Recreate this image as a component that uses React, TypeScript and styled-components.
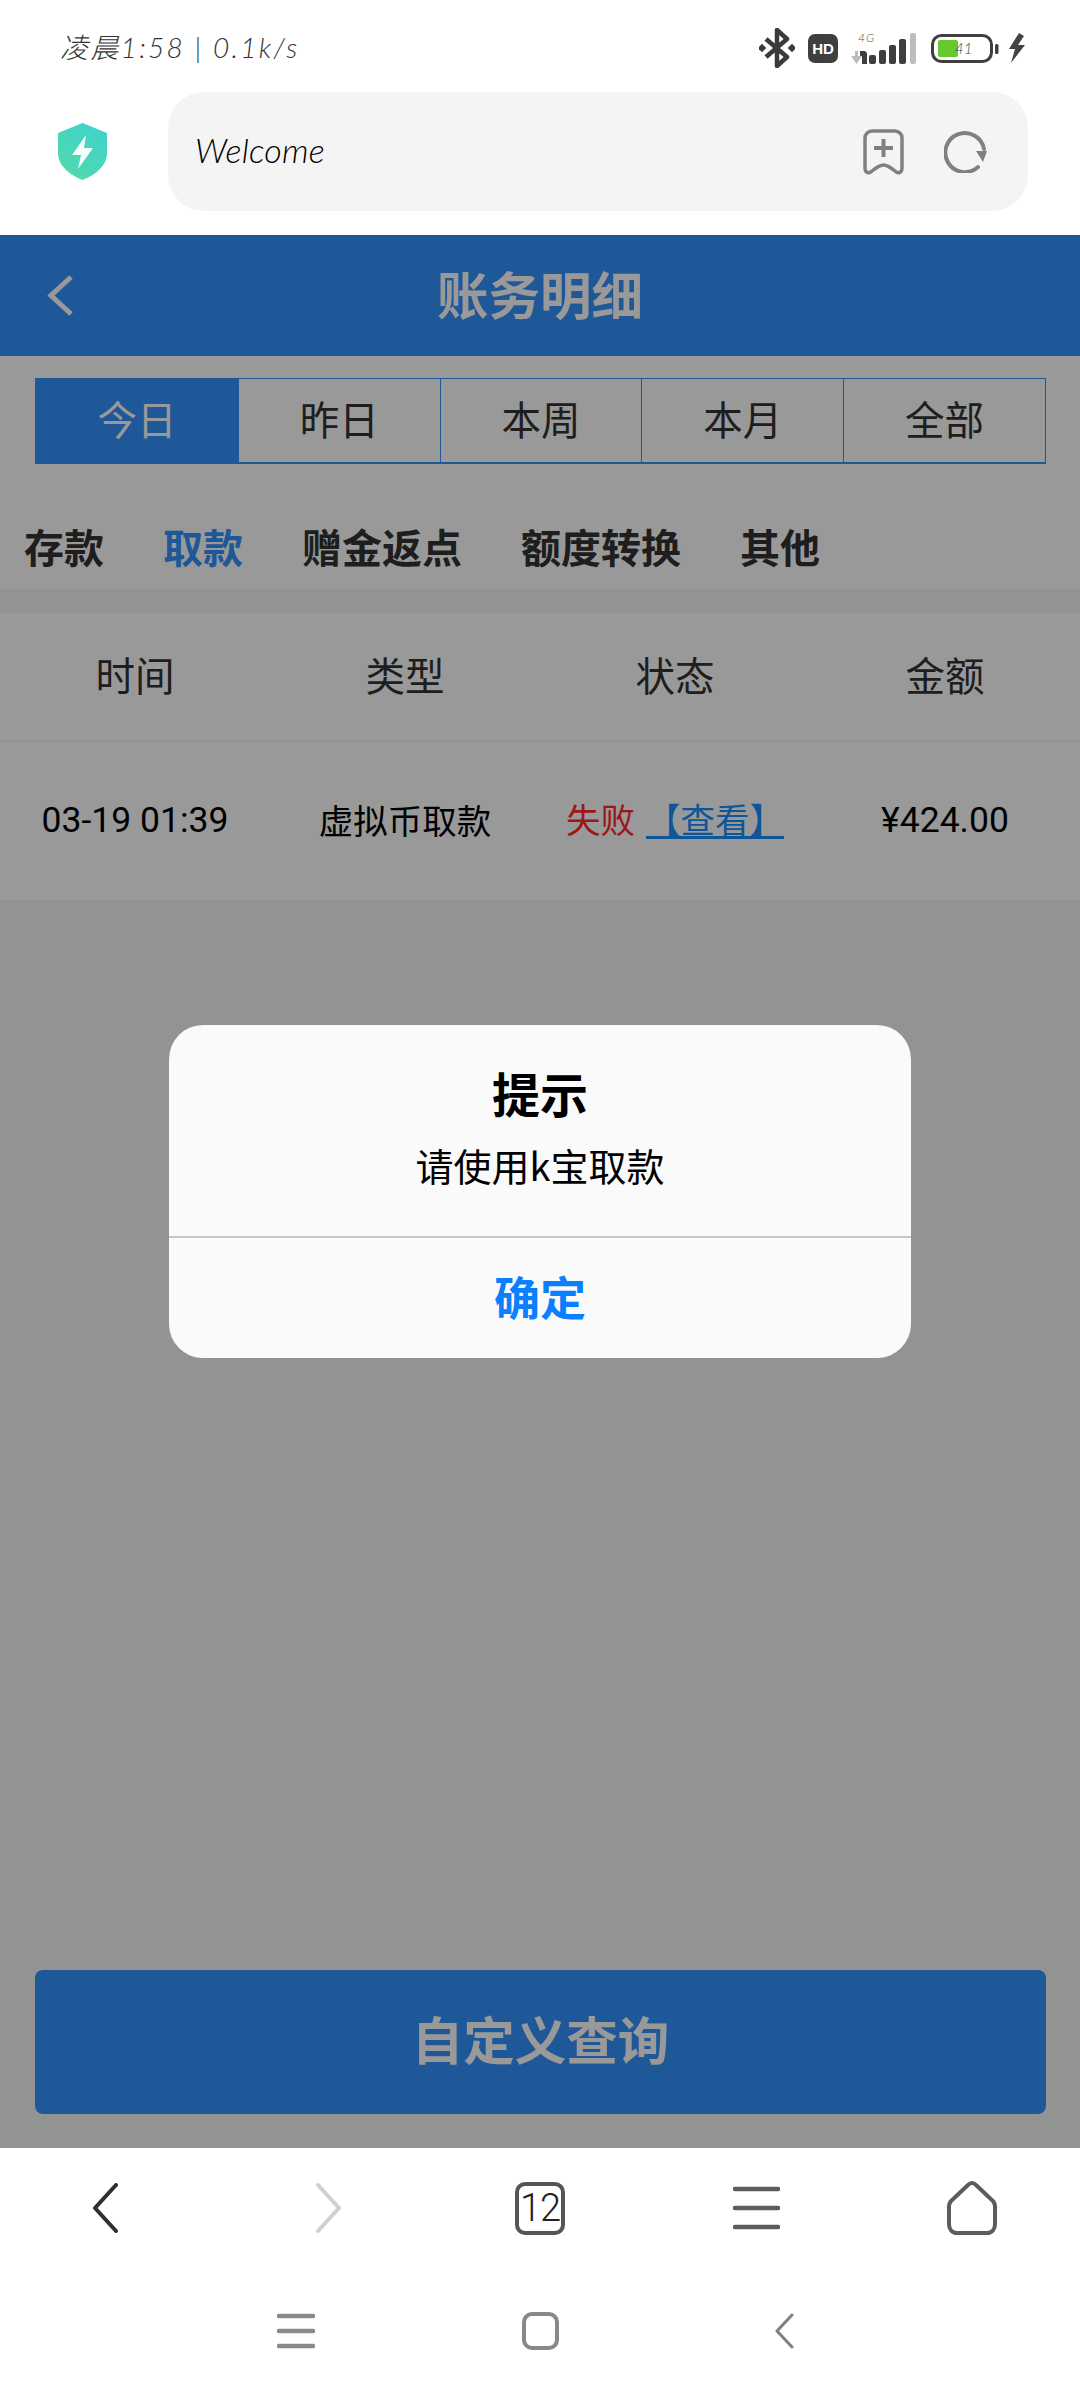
import React from "react";
import styled, { createGlobalStyle } from "styled-components";

const CJK = `"Noto Sans CJK SC", "Noto Sans", sans-serif`;
const LATIN = `Roboto, "Noto Sans CJK SC", sans-serif`;
const HAND = `Lato, "Noto Sans CJK SC", sans-serif`;
const PRIMARY = "#3493fd";

const Global = createGlobalStyle`
  html, body { margin: 0; padding: 0; background: #fff; }
  * { box-sizing: border-box; }
`;

const Screen = styled.div`
  width: 1080px;
  height: 2400px;
  display: flex;
  flex-direction: column;
  background: #fff;
  font-family: ${CJK};
  overflow: hidden;
`;

/* ---------- status bar ---------- */
const StatusBar = styled.div`
  height: 92px;
  padding: 0 55px 0 60px;
  display: flex;
  align-items: center;
  justify-content: space-between;
`;
const StatusText = styled.div`
  font-family: ${HAND};
  font-size: 28px;
  font-weight: 300;
  font-style: italic;
  letter-spacing: 2.3px;
  color: #333;
  white-space: nowrap;
`;
const StatusIcons = styled.div`
  display: flex;
  align-items: center;
  padding-top: 4px;
`;
const StatusIcon = styled.svg<{ $gap?: number }>`
  display: block;
  margin-right: ${(p) => p.$gap ?? 0}px;
  flex: none;
`;

/* ---------- address row ---------- */
const AddressRow = styled.div`
  height: 143px;
  padding: 0 52px 24px 58px;
  display: flex;
  align-items: center;
  gap: 61px;
`;
const AddressBar = styled.div`
  flex: 1;
  height: 119px;
  border-radius: 36px;
  background: #f4f4f4;
  padding: 0 41px 0 27px;
  display: flex;
  align-items: center;
`;
const AddressText = styled.div`
  flex: 1;
  font-family: ${HAND};
  font-size: 34px;
  font-weight: 300;
  font-style: italic;
  color: #000;
  letter-spacing: 0.2px;
  padding-bottom: 5px;
`;
const AddressIcons = styled.div`
  display: flex;
  align-items: center;
  gap: 40px;
`;

/* ---------- page ---------- */
const Page = styled.div`
  position: relative;
  height: 1913px;
  display: flex;
  flex-direction: column;
  background: #f3f6f5;
  flex: none;
`;
const Top = styled.div`
  background: #fff;
  height: 354px;
  flex: none;
  display: flex;
  flex-direction: column;
`;
const Header = styled.div`
  height: 121px;
  flex: none;
  background: ${PRIMARY};
  display: grid;
  grid-template-columns: 1fr auto 1fr;
  align-items: center;
  color: #fff;
  padding-left: 47px;
`;
const HeaderTitle = styled.div`
  font-size: 51.500px;
  font-weight: 700;
  line-height: 1;
  margin-left: -47px;
  margin-top: -6px;
`;
const Tabs = styled.div`
  margin: 22px 34px 0 35px;
  height: 86px;
  display: grid;
  grid-template-columns: repeat(5, 1fr);
  border: 1.5px solid ${PRIMARY};
  border-bottom-width: 2px;
`;
const Tab = styled.div<{ $active?: boolean; $first?: boolean }>`
  display: flex;
  align-items: center;
  justify-content: center;
  font-size: 39.500px;
  line-height: 1;
  padding-bottom: 6px;
  color: ${(p) => (p.$active ? "#fff" : "#333")};
  background: ${(p) => (p.$active ? PRIMARY : "transparent")};
  border-left: ${(p) => (p.$first ? "none" : `1.5px solid ${PRIMARY}`)};
`;
const Categories = styled.div`
  flex: 1;
  display: flex;
  align-items: center;
  gap: 59px;
  padding: 38px 0 0 24px;
`;
const Category = styled.div<{ $active?: boolean }>`
  font-size: 40px;
  font-weight: 700;
  line-height: 1;
  color: ${(p) => (p.$active ? PRIMARY : "#333")};
  white-space: nowrap;
`;
const TableRow = styled.div<{ $height: number }>`
  height: ${(p) => p.$height}px;
  flex: none;
  background: #fff;
  display: grid;
  grid-template-columns: repeat(4, 270px);
  align-items: center;
  justify-items: center;
  border-bottom: 2px solid #f6f6f6;
`;
const Strip = styled.div`
  height: 24px;
  flex: none;
  background: #f3f6f5;
`;
const HeadCell = styled.div`
  font-size: 39.500px;
  line-height: 1;
  color: #333;
  padding-bottom: 6px;
`;
const Cell = styled.div`
  font-size: 35.500px;
  line-height: 1;
  color: #000;
  white-space: nowrap;
  font-family: ${LATIN};
`;
const CjkCell = styled(Cell)`
  font-family: ${CJK};
  font-size: 34.500px;
  padding-bottom: 4px;
`;
const StatusCell = styled.div`
  display: flex;
  align-items: center;
  gap: 11px;
  font-size: 34.500px;
  line-height: 1.1;
  white-space: nowrap;
  padding-bottom: 4px;
`;
const Fail = styled.span`
  color: #ff2a2a;
`;
const Look = styled.span`
  color: #1a8fff;
  text-decoration: underline;
  text-underline-offset: 3px;
`;
const Spacer = styled.div`
  flex: 1;
`;
const QueryButton = styled.div`
  margin: 0 34px 34px 35px;
  height: 144px;
  flex: none;
  border-radius: 8px;
  background: ${PRIMARY};
  color: #fff;
  font-size: 51.500px;
  font-weight: 700;
  line-height: 1;
  padding-bottom: 8px;
  display: flex;
  align-items: center;
  justify-content: center;
`;

/* ---------- dialog ---------- */
const Overlay = styled.div`
  position: absolute;
  inset: 0;
  background: rgba(0, 0, 0, 0.4);
  display: flex;
  align-items: center;
  justify-content: center;
`;
const Dialog = styled.div`
  width: 742px;
  height: 333px;
  border-radius: 34px;
  background: #fafafa;
  display: flex;
  flex-direction: column;
  overflow: hidden;
`;
const DialogBody = styled.div`
  height: 213px;
  flex: none;
  padding-top: 37px;
  display: flex;
  flex-direction: column;
  align-items: center;
  border-bottom: 2px solid #c8c8c8;
`;
const DialogTitle = styled.div`
  font-size: 48px;
  font-weight: 700;
  line-height: 60px;
  color: #000;
`;
const DialogText = styled.div`
  margin-top: 17px;
  font-size: 38px;
  line-height: 52px;
  color: #000;
`;
const DialogAction = styled.div`
  flex: 1;
  display: flex;
  align-items: center;
  justify-content: center;
  font-size: 46px;
  font-weight: 700;
  line-height: 1;
  color: #0a7fff;
  padding-bottom: 6px;
`;

/* ---------- browser nav ---------- */
const BrowserNav = styled.div`
  height: 120px;
  flex: none;
  display: grid;
  grid-template-columns: repeat(5, 216px);
  align-items: center;
  justify-items: center;
`;
const SystemNav = styled.div`
  flex: 1;
  display: grid;
  grid-template-columns: repeat(3, 244px);
  justify-content: center;
  align-items: center;
  justify-items: center;
  padding-bottom: 12px;
  padding-top: 6px;
`;
const TabCount = styled.div`
  position: relative;
  width: 50px;
  height: 53px;
  border: 4px solid #555;
  border-radius: 10px;
  display: flex;
  align-items: center;
  justify-content: center;
  font-family: ${LATIN};
  font-size: 38px;
  font-weight: 300;
  letter-spacing: -1px;
  color: #222;
`;
const Icon = styled.svg`
  display: block;
  flex: none;
`;
const NavChevron = styled.svg<{ $shift: number }>`
  display: block;
  flex: none;
  margin-left: ${(p) => p.$shift}px;
`;

export default function App() {
  return (
    <Screen>
      <Global />
      <StatusBar>
        <StatusText>凌晨1:58 | 0.1k/s</StatusText>
        <StatusIcons>
          <StatusIcon $gap={13} width="36" height="40" viewBox="0 0 36 40" fill="none">
            <path d="M7 11 L28 29 L18 38 V2 L28 11 L7 29" stroke="#3a3a3a" strokeWidth="4.5" strokeLinejoin="round" />
            <rect x="0" y="17" width="6" height="6" transform="rotate(45 3 20)" fill="#3a3a3a" />
            <rect x="30" y="17" width="6" height="6" transform="rotate(45 33 20)" fill="#3a3a3a" />
          </StatusIcon>
          <StatusIcon $gap={12} width="30" height="29" viewBox="0 0 30 29">
            <rect width="30" height="29" rx="7" fill="#3f3f3f" />
            <text x="15" y="20" textAnchor="middle" fontFamily="Liberation Sans" fontWeight="700" fontSize="15" fill="#fff">HD</text>
          </StatusIcon>
          <StatusIcon $gap={14} width="67" height="34" viewBox="0 0 67 34">
            <text x="8" y="11" fontFamily="Lato" fontStyle="italic" fontWeight="300" fontSize="12" fill="#555" letterSpacing="1">4G</text>
            <path d="M1 25h4v-5h3v5h4l-5.500 8z" fill="#bdbdbd" />
            <path d="M10 20 h5 l2 2 v11 h-5 v-8 h-2z" fill="#3f3f3f" />
            <rect x="19" y="24" width="7" height="9" rx="2" fill="#3f3f3f" />
            <rect x="29" y="19" width="7" height="14" rx="2" fill="#3f3f3f" />
            <rect x="39" y="14" width="7" height="19" rx="2" fill="#3f3f3f" />
            <rect x="49" y="8" width="7" height="25" rx="2" fill="#3f3f3f" />
            <rect x="60" y="2" width="6" height="31" rx="2" fill="#bdbdbd" />
          </StatusIcon>
          <StatusIcon $gap={9} width="68" height="29" viewBox="0 0 68 29" fill="none">
            <rect x="1.500" y="1.500" width="59" height="26" rx="9" stroke="#3f3f3f" strokeWidth="3" />
            <rect x="7" y="6" width="20" height="17" rx="2" fill="#66c92d" />
            <text x="24" y="20" fontFamily="Lato" fontStyle="italic" fontWeight="300" fontSize="15" fill="#444">41</text>
            <rect x="64" y="10" width="3.500" height="10" rx="1.500" fill="#3f3f3f" />
          </StatusIcon>
          <StatusIcon width="17" height="30" viewBox="0 0 17 30">
            <path d="M11 0 L1 16 H7 L3 30 L17 12 H10 L16 3z" fill="#444" />
          </StatusIcon>
        </StatusIcons>
      </StatusBar>

      <AddressRow>
        <Icon width="49" height="57" viewBox="0 0 49 57">
          <defs>
            <linearGradient id="shield" x1="0.8" y1="0" x2="0.2" y2="1">
              <stop offset="0" stopColor="#3ed3cb" />
              <stop offset="1" stopColor="#52d9ad" />
            </linearGradient>
          </defs>
          <path d="M24.500 0 L49 10 V30 C49 43 37 52 24.500 57 C12 52 0 43 0 30 V10z" fill="url(#shield)" />
          <path d="M28 12 L14 32 H23 L20 46 L35 25 H26z" fill="#f2fffb" />
        </Icon>
        <AddressBar>
          <AddressText>Welcome</AddressText>
          <AddressIcons>
            <Icon width="41" height="46" viewBox="0 0 41 46" fill="none" stroke="#808080">
              <path d="M9 2 H32 A7 7 0 0 1 39 9 V39 C39 44 35 45 32 42 C27 38 24 36 20.500 36 C17 36 14 38 9 42 C6 45 2 44 2 39 V9 A7 7 0 0 1 9 2z" strokeWidth="3.500" />
              <path d="M11 19 H30 M20.500 10 V28" strokeWidth="4" />
            </Icon>
            <Icon width="43" height="42" viewBox="0 0 43 42" fill="none">
              <path d="M40 18 A19.500 19.500 0 1 0 34 36" stroke="#808080" strokeWidth="4" strokeLinecap="round" />
              <path d="M32 20 H43 L39 31z" fill="#808080" />
            </Icon>
          </AddressIcons>
        </AddressBar>
      </AddressRow>

      <Page>
        <Top>
          <Header>
            <Icon width="27" height="41" viewBox="0 0 27 41" fill="none">
              <path d="M24 2 L4 20.500 L24 39" stroke="#fff" strokeWidth="5" />
            </Icon>
            <HeaderTitle>账务明细</HeaderTitle>
          </Header>
          <Tabs>
            <Tab $active $first>今日</Tab>
            <Tab>昨日</Tab>
            <Tab>本周</Tab>
            <Tab>本月</Tab>
            <Tab>全部</Tab>
          </Tabs>
          <Categories>
            <Category>存款</Category>
            <Category $active>取款</Category>
            <Category>赠金返点</Category>
            <Category>额度转换</Category>
            <Category>其他</Category>
          </Categories>
        </Top>
        <Strip />
        <TableRow $height={129}>
          <HeadCell>时间</HeadCell>
          <HeadCell>类型</HeadCell>
          <HeadCell>状态</HeadCell>
          <HeadCell>金额</HeadCell>
        </TableRow>
        <TableRow $height={160}>
          <Cell>03-19 01:39</Cell>
          <CjkCell>虚拟币取款</CjkCell>
          <StatusCell>
            <Fail>失败</Fail>
            <Look>【查看】</Look>
          </StatusCell>
          <Cell>¥424.00</Cell>
        </TableRow>
        <Spacer />
        <QueryButton>自定义查询</QueryButton>
        <Overlay>
          <Dialog>
            <DialogBody>
              <DialogTitle>提示</DialogTitle>
              <DialogText>请使用k宝取款</DialogText>
            </DialogBody>
            <DialogAction>确定</DialogAction>
          </Dialog>
        </Overlay>
      </Page>

      <BrowserNav>
        <NavChevron $shift={-5} width="27" height="50" viewBox="0 0 27 50" fill="none">
          <path d="M24 2 L3 25 L24 48" stroke="#2f2f2f" strokeWidth="4" strokeLinecap="round" strokeLinejoin="round" />
        </NavChevron>
        <NavChevron $shift={8} width="27" height="50" viewBox="0 0 27 50" fill="none">
          <path d="M3 2 L24 25 L3 48" stroke="#d0d0d0" strokeWidth="4" strokeLinecap="round" strokeLinejoin="round" />
        </NavChevron>
        <TabCount>12</TabCount>
        <Icon width="47" height="44" viewBox="0 0 47 44" fill="none">
          <path d="M2 3 H45 M2 22 H45 M2 41 H45" stroke="#5c5c5c" strokeWidth="4.500" strokeLinecap="round" />
        </Icon>
        <Icon width="50" height="54" viewBox="0 0 50 54" fill="none">
          <path d="M25 2 C23 2 22 3 21 4 L4 20 C2.500 22 2 23 2 25 V43 C2 48 5 52 10 52 H40 C45 52 48 48 48 43 V25 C48 23 47.500 22 46 20 L29 4 C28 3 27 2 25 2z" stroke="#5c5c5c" strokeWidth="4" />
        </Icon>
      </BrowserNav>
      <SystemNav>
        <Icon width="38" height="36" viewBox="0 0 38 36" fill="none">
          <path d="M2 3 H36 M2 18 H36 M2 33 H36" stroke="#8a8a8a" strokeWidth="4.500" strokeLinecap="round" />
        </Icon>
        <Icon width="37" height="38" viewBox="0 0 37 38" fill="none">
          <rect x="2" y="2" width="33" height="34" rx="8" stroke="#888" strokeWidth="4" />
        </Icon>
        <Icon width="20" height="36" viewBox="0 0 20 36" fill="none">
          <path d="M18 2 L3 18 L18 34" stroke="#808080" strokeWidth="3" strokeLinecap="round" strokeLinejoin="round" />
        </Icon>
      </SystemNav>
    </Screen>
  );
}
